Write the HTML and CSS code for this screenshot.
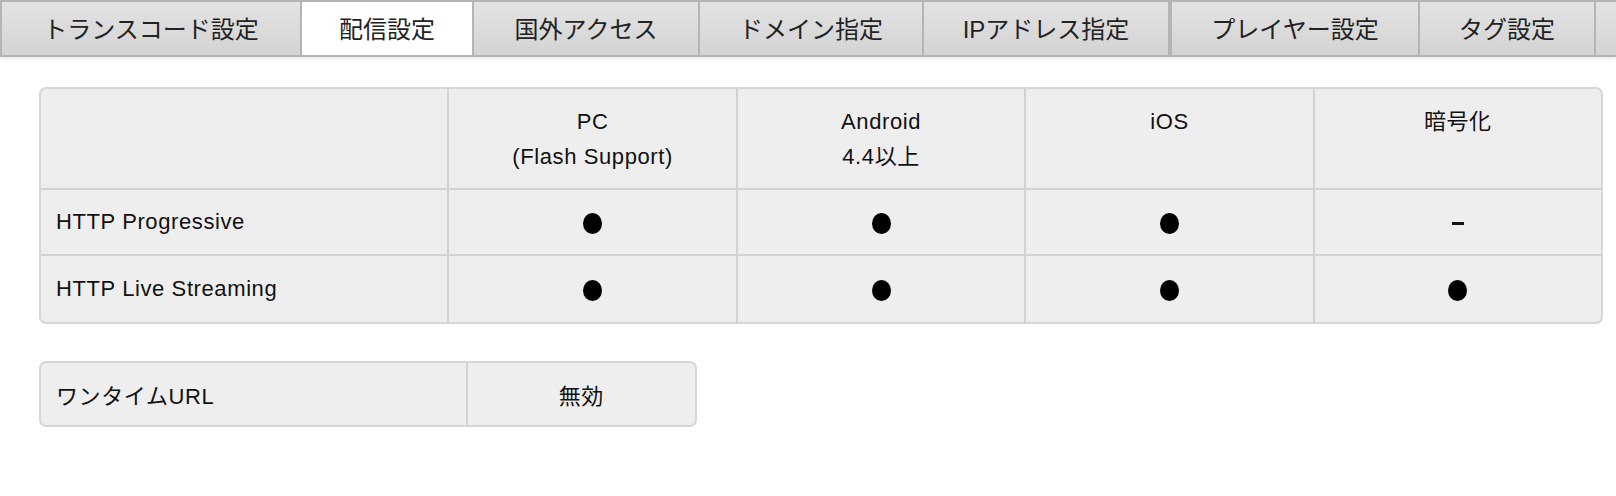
FILE: index.html
```html
<!DOCTYPE html>
<html lang="ja">
<head>
  <meta charset="UTF-8">
  <title>配信設定</title>
  <link rel="stylesheet" href="styles.css">
</head>
<body>
  <div class="tabs">
    <div class="tab tab-transcode">トランスコード設定</div>
    <div class="tab tab-delivery active">配信設定</div>
    <div class="tab tab-overseas">国外アクセス</div>
    <div class="tab tab-domain">ドメイン指定</div>
    <div class="tab tab-ip">IPアドレス指定</div>
    <div class="tab tab-player">プレイヤー設定</div>
    <div class="tab tab-tag">タグ設定</div>
    <div class="tab tab-rest"></div>
  </div>

  <div class="content">
    <!-- 配信方式ごとの対応表 -->
    <table class="grid support">
      <tr class="head">
        <td class="label"></td>
        <td>PC<br>(Flash Support)</td>
        <td>Android<br>4.4以上</td>
        <td>iOS</td>
        <td>暗号化</td>
      </tr>
      <tr>
        <td class="label">HTTP Progressive</td>
        <td><span class="dot"></span></td>
        <td><span class="dot"></span></td>
        <td><span class="dot"></span></td>
        <td><span class="dash"></span></td>
      </tr>
      <tr>
        <td class="label">HTTP Live Streaming</td>
        <td><span class="dot"></span></td>
        <td><span class="dot"></span></td>
        <td><span class="dot"></span></td>
        <td><span class="dot"></span></td>
      </tr>
    </table>

    <!-- ワンタイムURL -->
    <table class="grid onetime">
      <tr>
        <td class="label">ワンタイムURL</td>
        <td>無効</td>
      </tr>
    </table>
  </div>
</body>
</html>
```

FILE: styles.css
```css
body {
  margin: 0;
  font-family: "Liberation Sans", "Noto Sans CJK JP", sans-serif;
  color: #111;
  background: #fff;
}

/* tab bar */
.tabs {
  display: flex;
  height: 53px;
  border-top: 2px solid #b4b4b4;
  border-bottom: 2px solid #b4b4b4;
  border-left: 2px solid #b4b4b4;
  background: linear-gradient(#e3e3e3, #d3d3d3);
  box-shadow: 0 2px 4px rgba(0, 0, 0, 0.1);
  overflow: hidden;
}
.tab {
  flex: none;
  display: flex;
  align-items: center;
  justify-content: center;
  border-right: 2px solid #b4b4b4;
  font-size: 24px;
  color: #222;
  box-sizing: border-box;
  padding-bottom: 2px;
}
.tab.active {
  background: #fff;
}
.tab-transcode { width: 300px; }
.tab-delivery { width: 172px; }
.tab-overseas { width: 226px; }
.tab-domain { width: 224px; }
.tab-ip { width: 248px; border-right-width: 4px; }
.tab-player { width: 248px; }
.tab-tag { width: 176px; }
.tab-rest { flex: 1; border-right: none; }

/* content area */
.content {
  padding: 30px 13px 0 39px;
}

.grid {
  border-collapse: separate;
  border-spacing: 0;
  border: 2px solid #d6d6d6;
  border-radius: 7px;
  background: #eeeeee;
  font-size: 22px;
  letter-spacing: 0.6px;
  overflow: hidden;
}
.grid td {
  border-right: 2px solid #d2d2d2;
  border-bottom: 2px solid #d2d2d2;
  text-align: center;
  padding: 0;
}
.grid td:last-child {
  border-right: none;
}
.grid tr:last-child td {
  border-bottom: none;
}
.grid td.label {
  text-align: left;
  padding-left: 15px;
}

.support {
  width: 1564px;
}
.support td {
  width: 287px;
  height: 64px;
}
.support td.label {
  width: 392px;
}
.support tr.head td {
  height: 84px;
  vertical-align: top;
  padding-top: 15px;
  line-height: 35px;
}
.support tr:last-child td {
  height: 66px;
}

/* supported / not supported marks */
.dot {
  display: inline-block;
  width: 19px;
  height: 21px;
  border-radius: 50%;
  background: #000;
  vertical-align: middle;
}
.dash {
  display: inline-block;
  width: 12px;
  height: 3px;
  background: #111;
  vertical-align: middle;
}

.onetime {
  margin-top: 37px;
  width: 658px;
}
.onetime td {
  height: 62px;
  width: 228px;
}
.onetime td.label {
  width: 411px;
}
```
